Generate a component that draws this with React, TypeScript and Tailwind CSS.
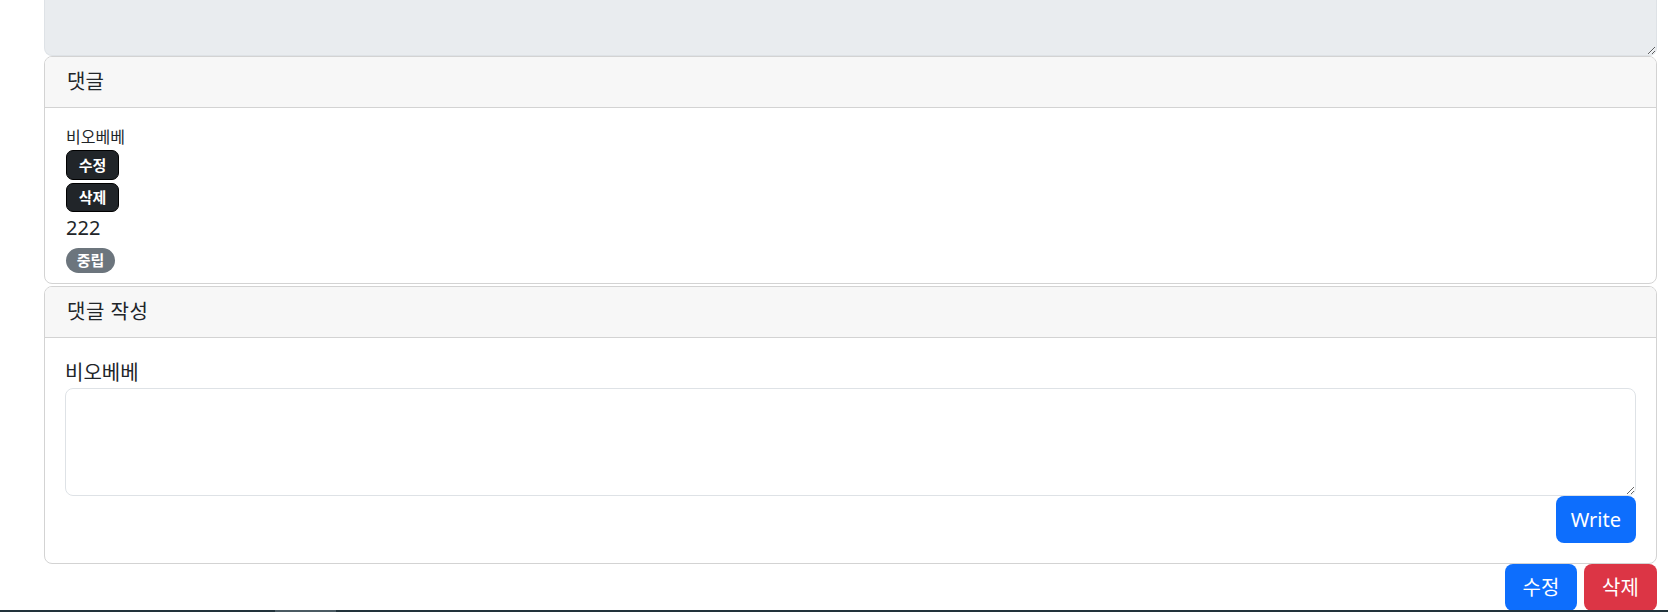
export default function App() {
  const font = { fontFamily: '"Noto Sans", "Noto Sans CJK KR", sans-serif' }

  return (
    <div style={font} className="relative h-[612px] overflow-hidden bg-white text-[#212529]">
      <div className="pl-[44px] pr-[11px]">
        {/* previous post body, cut off at top */}
        <textarea
          readOnly
          className="block h-[56px] w-full rounded-b-[8px] border border-t-0 border-[#dee2e6] bg-[#e9ecef] outline-none"
        />

        {/* comment list */}
        <div className="overflow-hidden rounded-[8px] border border-[#d3d3d3]">
          <div className="border-b border-[#d3d3d3] bg-[#f7f7f7] px-[22px] py-[10px] text-[20px] leading-[30px]">
            댓글
          </div>
          <div className="px-[21px] pb-[10px] pt-[20px]">
            <div className="text-[16px] leading-[18px]">비오베베</div>
            <button className="mt-[4px] flex h-[30px] w-[53px] items-center justify-center rounded-[7px] border border-black bg-[#212529] text-[15px] font-bold text-white">
              수정
            </button>
            <button className="mt-[3px] flex h-[29px] w-[53px] items-center justify-center rounded-[7px] border border-black bg-[#212529] text-[15px] font-bold text-white">
              삭제
            </button>
            <div className="mt-[1px] text-[20px] leading-[30px]">222</div>
            <span className="mt-[5px] flex h-[25px] w-[49px] items-center justify-center rounded-full bg-[#6c757d] text-[15px] font-bold text-white">
              중립
            </span>
          </div>
        </div>

        {/* write comment */}
        <div className="mt-[2px] overflow-hidden rounded-[8px] border border-[#d3d3d3]">
          <div className="border-b border-[#d3d3d3] bg-[#f7f7f7] px-[22px] py-[10px] text-[20px] leading-[30px] tracking-[0.5px]">
            댓글 작성
          </div>
          <div className="px-[20px] pb-[20px] pt-[20px]">
            <div className="text-[20px] leading-[30px]">비오베베</div>
            <textarea className="block h-[108px] w-full rounded-[8px] border border-[#dee2e6] bg-white outline-none" />
            <div className="flex justify-end">
              <button className="h-[47px] rounded-[8px] bg-[#0d6efd] px-[15px] text-[20px] text-white">
                Write
              </button>
            </div>
          </div>
        </div>

        <div className="flex justify-end gap-[7px]">
          <button className="h-[47px] w-[72px] rounded-[8px] bg-[#0d6efd] text-[20px] text-white">수정</button>
          <button className="h-[47px] w-[73px] rounded-[8px] bg-[#dc3545] text-[20px] text-white">삭제</button>
        </div>
      </div>

      {/* taskbar edge peeking in at the bottom */}
      <div className="absolute bottom-0 left-0 right-0 h-[2px] bg-[#22333b]">
        <div className="ml-[275px] h-full w-[61px] bg-[#4b5b63]" />
      </div>
    </div>
  )
}
